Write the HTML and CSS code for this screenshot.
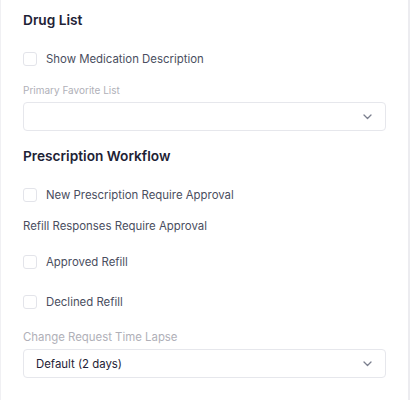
FILE: index.html
```html
<!DOCTYPE html>
<html>
<head>
<meta charset="utf-8">
<link rel="stylesheet" href="styles.css">
</head>
<body>
<div class="panel">
  <h2 class="heading first">Drug List</h2>
  <label class="check-row r1"><span class="box"></span><span>Show Medication Description</span></label>
  <div class="field-label fl1">Primary Favorite List</div>
  <div class="select"><span class="value"></span><svg class="chev" width="9" height="6" viewBox="0 0 9 6"><path d="M1 1l3.5 3.5L8 1" fill="none" stroke="#7b7f8e" stroke-width="1.3" stroke-linecap="round" stroke-linejoin="round"/></svg></div>

  <h2 class="heading second">Prescription Workflow</h2>
  <label class="check-row r2"><span class="box"></span><span>New Prescription Require Approval</span></label>
  <div class="sub-title">Refill Responses Require Approval</div>
  <label class="check-row r3"><span class="box"></span><span>Approved Refill</span></label>
  <label class="check-row r4"><span class="box"></span><span>Declined Refill</span></label>
  <div class="field-label fl2">Change Request Time Lapse</div>
  <div class="select"><span class="value">Default (2 days)</span><svg class="chev" width="9" height="6" viewBox="0 0 9 6"><path d="M1 1l3.5 3.5L8 1" fill="none" stroke="#7b7f8e" stroke-width="1.3" stroke-linecap="round" stroke-linejoin="round"/></svg></div>
</div>
</body>
</html>
```
FILE: styles.css
```css
html, body {
  margin: 0;
  padding: 0;
  background: #ffffff;
}
body {
  font-family: Inter, "Noto Sans", sans-serif;
}
.panel {
  width: 410px;
  height: 400px;
  box-sizing: border-box;
  border-left: 1px solid #f0f0f3;
  border-right: 2px solid #ececf0;
  padding: 0 22px 0 22px;
  display: flex;
  flex-direction: column;
}
.heading {
  margin: 0;
  font-size: 13.7px;
  line-height: 20px;
  font-weight: 600;
  color: #1e2235;
}
.heading.first { margin-top: 10px; }
.heading.second { margin-top: 15px; }
.check-row {
  display: flex;
  align-items: center;
  gap: 9px;
  height: 20px;
  font-size: 11.4px;
  color: #4a4e60;
}
.r1 { margin-top: 19px; }
.r2 { margin-top: 19px; }
.r3 { margin-top: 18px; }
.r4 { margin-top: 20px; }
.box {
  width: 14px;
  height: 14px;
  box-sizing: border-box;
  border: 1px solid #e3e4ea;
  border-radius: 3px;
  background: #fff;
  flex: none;
}
.field-label {
  line-height: 16px;
  color: #b0b0b8;
}
.fl1 { margin-top: 13px; font-size: 10px; }
.fl2 { margin-top: 17px; font-size: 11.4px; }
.sub-title {
  margin-top: 13px;
  font-size: 11.4px;
  line-height: 16px;
  color: #4a4e60;
}
.select {
  margin-top: 4px;
  height: 29px;
  box-sizing: border-box;
  border: 1px solid #e6e7ec;
  border-radius: 4px;
  display: flex;
  align-items: center;
  justify-content: space-between;
  padding: 0 13px 0 12px;
}
.value {
  font-size: 11.4px;
  color: #1e2235;
}
.chev { flex: none; }
```
